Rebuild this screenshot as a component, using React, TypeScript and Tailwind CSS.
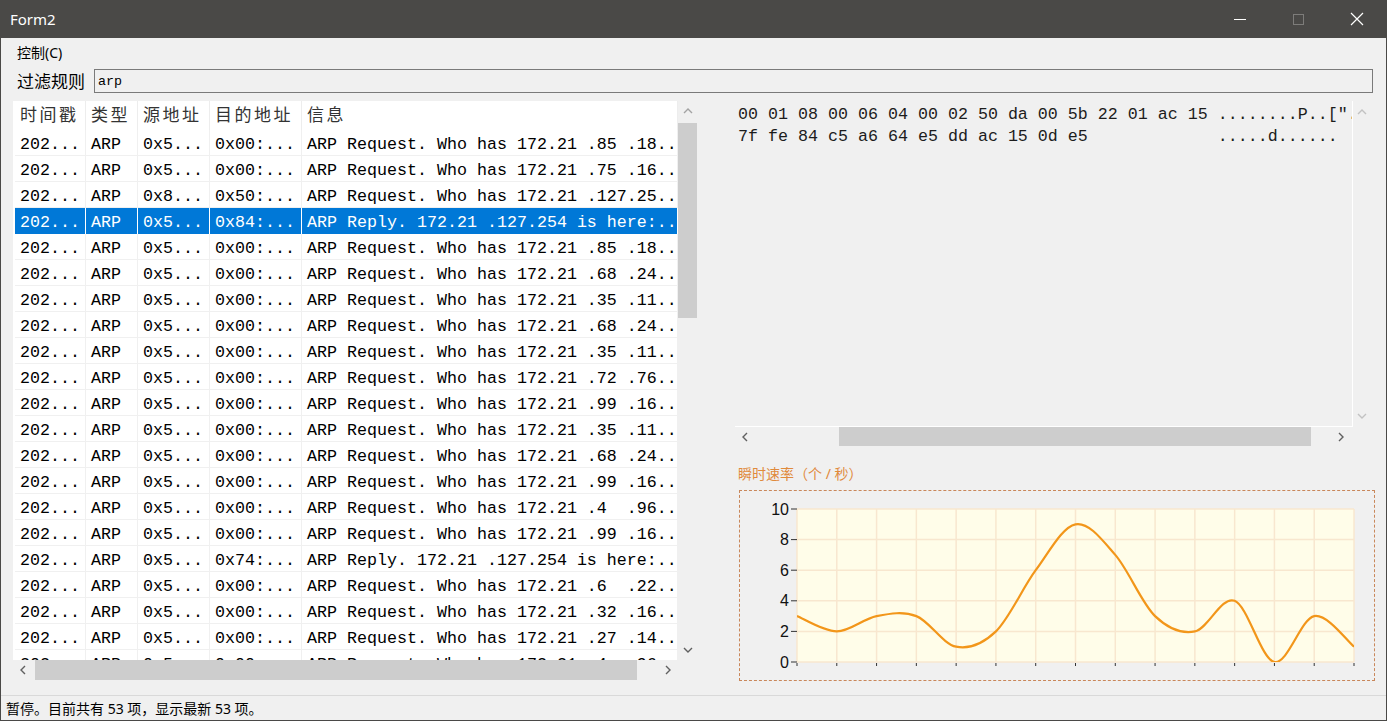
import React from 'react';

const MONO = "font-['Liberation_Mono','Noto_Sans_CJK_SC',monospace]";
const UI = "font-['Noto_Sans','Noto_Sans_CJK_SC',sans-serif]";

// [src, dst, info]
const rows: [string, string, string][] = [
  ['0x5...', '0x00:...', 'ARP Request. Who has 172.21 .85 .18..'],
  ['0x5...', '0x00:...', 'ARP Request. Who has 172.21 .75 .16..'],
  ['0x8...', '0x50:...', 'ARP Request. Who has 172.21 .127.25..'],
  ['0x5...', '0x84:...', 'ARP Reply. 172.21 .127.254 is here:..'],
  ['0x5...', '0x00:...', 'ARP Request. Who has 172.21 .85 .18..'],
  ['0x5...', '0x00:...', 'ARP Request. Who has 172.21 .68 .24..'],
  ['0x5...', '0x00:...', 'ARP Request. Who has 172.21 .35 .11..'],
  ['0x5...', '0x00:...', 'ARP Request. Who has 172.21 .68 .24..'],
  ['0x5...', '0x00:...', 'ARP Request. Who has 172.21 .35 .11..'],
  ['0x5...', '0x00:...', 'ARP Request. Who has 172.21 .72 .76..'],
  ['0x5...', '0x00:...', 'ARP Request. Who has 172.21 .99 .16..'],
  ['0x5...', '0x00:...', 'ARP Request. Who has 172.21 .35 .11..'],
  ['0x5...', '0x00:...', 'ARP Request. Who has 172.21 .68 .24..'],
  ['0x5...', '0x00:...', 'ARP Request. Who has 172.21 .99 .16..'],
  ['0x5...', '0x00:...', 'ARP Request. Who has 172.21 .4  .96..'],
  ['0x5...', '0x00:...', 'ARP Request. Who has 172.21 .99 .16..'],
  ['0x5...', '0x74:...', 'ARP Reply. 172.21 .127.254 is here:..'],
  ['0x5...', '0x00:...', 'ARP Request. Who has 172.21 .6  .22..'],
  ['0x5...', '0x00:...', 'ARP Request. Who has 172.21 .32 .16..'],
  ['0x5...', '0x00:...', 'ARP Request. Who has 172.21 .27 .14..'],
  ['0x5...', '0x00:...', 'ARP Request. Who has 172.21 .4  .96..'],
];
const SELECTED = 3;

const hexLines = [
  '00 01 08 00 06 04 00 02 50 da 00 5b 22 01 ac 15 ........P..[\"...',
  '7f fe 84 c5 a6 64 e5 dd ac 15 0d e5             .....d......',
];

// chart geometry (inside the dashed box)
const X0 = 57;
const X1 = 614;
const YT = 18;
const YB = 171;
const values = [3, 2, 3, 3, 1, 2, 6, 9, 7, 3, 2, 4, 0, 3, 1];
const step = (X1 - X0) / (values.length - 1);
const px = (i: number) => X0 + i * step;
const py = (v: number) => YB - (v * (YB - YT)) / 10;

function splinePath() {
  const pts = values.map((v, i) => [px(i), py(v)]);
  let d = `M${pts[0][0]},${pts[0][1]}`;
  for (let i = 0; i < pts.length - 1; i++) {
    const p0 = pts[Math.max(0, i - 1)];
    const p1 = pts[i];
    const p2 = pts[i + 1];
    const p3 = pts[Math.min(pts.length - 1, i + 2)];
    const c1 = [p1[0] + (p2[0] - p0[0]) / 6, p1[1] + (p2[1] - p0[1]) / 6];
    const c2 = [p2[0] - (p3[0] - p1[0]) / 6, p2[1] - (p3[1] - p1[1]) / 6];
    d += ` C${c1[0]},${c1[1]} ${c2[0]},${c2[1]} ${p2[0]},${p2[1]}`;
  }
  return d;
}

type Dir = 'up' | 'down' | 'left' | 'right';

function Chevron({ dir, color }: { dir: Dir; color: string }) {
  const d = {
    up: 'M1 7 L5 3 L9 7',
    down: 'M1 3 L5 7 L9 3',
    left: 'M7 1 L3 5 L7 9',
    right: 'M3 1 L7 5 L3 9',
  }[dir];
  return (
    <svg width="10" height="10" viewBox="0 0 10 10">
      <path d={d} fill="none" stroke={color} strokeWidth="1.4" />
    </svg>
  );
}

function TitleBar() {
  return (
    <div className="flex h-[38px] items-center bg-[#4a4947] text-white">
      <span className={`${UI} pl-[10px] text-[15px]`}>Form2</span>
      <div className="ml-auto flex h-full items-center">
        <div className="flex h-full w-[58px] items-center justify-center">
          <div className="h-px w-[12px] bg-white" />
        </div>
        <div className="flex h-full w-[58px] items-center justify-center">
          <div className="h-[11px] w-[11px] border border-[#7d7c7a]" />
        </div>
        <div className="flex h-full w-[60px] items-center justify-center">
          <svg width="14" height="14" viewBox="0 0 14 14">
            <path d="M1 1 L13 13 M13 1 L1 13" stroke="white" strokeWidth="1.2" />
          </svg>
        </div>
      </div>
    </div>
  );
}

function PacketTable() {
  const cols = 'grid grid-cols-[71px_52px_72px_92px_1fr]';
  return (
    <div className="flex h-[580px] w-[684px] flex-col">
      <div className="flex h-[559px]">
        <div className={`${MONO} w-[665px] overflow-hidden bg-white pl-[2px] text-[16.66px]`}>
          <div className={`${cols} h-[29px] text-[17px] tracking-[2.5px] text-[#333]`}>
            {['时间戳', '类型', '源地址', '目的地址', '信息'].map(h => (
              <div key={h} className="flex items-center border-r border-[#ededed] pl-[5px] pt-[3px]">
                {h}
              </div>
            ))}
          </div>
          {rows.map((r, i) => {
            const sel = i === SELECTED;
            const cells = ['202...', 'ARP', r[0], r[1], r[2]];
            return (
              <div
                key={i}
                className={`${cols} h-[26px] border-b ${sel ? 'border-[#0078d7] bg-[#0078d7] text-white' : 'border-[#f0f0f0] text-black'}`}
              >
                {cells.map((c, j) => (
                  <div
                    key={j}
                    className={`flex items-center whitespace-pre border-r pl-[5px] pt-[3px] ${sel ? 'border-white' : 'border-[#f0f0f0]'}`}
                  >
                    {c}
                  </div>
                ))}
              </div>
            );
          })}
        </div>
        <div className="flex w-[19px] flex-col bg-[#f0f0f0]">
          <div className="flex h-[20px] items-center justify-center">
            <Chevron dir="up" color="#a3a3a3" />
          </div>
          <div className="mt-[2px] h-[195px] bg-[#cdcdcd]" />
          <div className="flex-1" />
          <div className="flex h-[20px] items-center justify-center">
            <Chevron dir="down" color="#606060" />
          </div>
        </div>
      </div>
      <div className="flex h-[20px]">
        <div className="flex w-[665px] items-center bg-[#f0f0f0]">
          <div className="flex h-full w-[20px] items-center justify-center">
            <Chevron dir="left" color="#606060" />
          </div>
          <div className="ml-[2px] h-full w-[602px] bg-[#cdcdcd]" />
          <div className="flex-1" />
          <div className="flex h-full w-[21px] items-center justify-center">
            <Chevron dir="right" color="#606060" />
          </div>
        </div>
        <div className="w-[19px] bg-[#f0f0f0]" />
      </div>
    </div>
  );
}

function HexView() {
  return (
    <div className="flex h-[345px] flex-col">
      <div className="flex h-[326px]">
        <div className={`${MONO} w-[618px] overflow-hidden border-r border-b border-white pl-[3px] pt-[3px] text-[16.66px] leading-[22px] text-[#1c1c1c]`}>
          {hexLines.map(l => (
            <div key={l} className="whitespace-pre">
              {l}
            </div>
          ))}
        </div>
        <div className="flex w-[17px] flex-col justify-between py-[6px]">
          <div className="flex justify-center">
            <Chevron dir="up" color="#c2c2c2" />
          </div>
          <div className="flex justify-center">
            <Chevron dir="down" color="#c2c2c2" />
          </div>
        </div>
      </div>
      <div className="flex h-[19px] w-[618px] items-center">
        <div className="flex h-full w-[20px] items-center justify-center">
          <Chevron dir="left" color="#606060" />
        </div>
        <div className="ml-[84px] h-full w-[472px] bg-[#cdcdcd]" />
        <div className="flex-1" />
        <div className="flex h-full w-[24px] items-center justify-center">
          <Chevron dir="right" color="#606060" />
        </div>
      </div>
    </div>
  );
}

function RateChart() {
  const hLines = [0, 2, 4, 6, 8, 10];
  return (
    <div className="ml-[4px] mt-[6px] h-[191px] w-[636px] border border-dashed border-[#c9875a]">
      <svg width="634" height="189" viewBox="0 0 634 189" className="block">
        <defs>
          <clipPath id="plot">
            <rect x={X0} y={YT} width={X1 - X0} height={YB - YT} />
          </clipPath>
        </defs>
        <rect x={X0} y={YT} width={X1 - X0} height={YB - YT} fill="#fffde9" />
        {values.map((_, i) => (
          <line key={`v${i}`} x1={px(i)} x2={px(i)} y1={YT} y2={YB} stroke="#f8e7cf" strokeWidth="1.5" />
        ))}
        {hLines.map(v => (
          <line key={`h${v}`} x1={X0} x2={X1} y1={py(v)} y2={py(v)} stroke="#f8e7cf" strokeWidth="1.5" />
        ))}
        {hLines.map(v => (
          <g key={`l${v}`}>
            <line x1={X0 - 6} x2={X0} y1={py(v)} y2={py(v)} stroke="#333" strokeWidth="1" />
            <text
              x={X0 - 8}
              y={py(v) + 5.5}
              textAnchor="end"
              fontSize="16"
              fontFamily="Liberation Sans, Arial, sans-serif"
              fill="#111"
            >
              {v}
            </text>
          </g>
        ))}
        {values.map((_, i) => (
          <line key={`t${i}`} x1={px(i)} x2={px(i)} y1={YB + 1} y2={YB + 4} stroke="#333" strokeWidth="1" />
        ))}
        <path d={splinePath()} fill="none" stroke="#f2961a" strokeWidth="2.2" clipPath="url(#plot)" />
      </svg>
    </div>
  );
}

export default function App() {
  return (
    <div className="flex h-[721px] w-[1387px] flex-col overflow-hidden bg-[#f0f0f0]">
      <TitleBar />
      <div className="flex flex-1 flex-col border-x border-b border-[#4a4947]">
        <div className={`${UI} flex h-[28px] items-center pl-[16px] text-[14px] text-black`}>控制(C)</div>
        <div className="mt-[3px] flex h-[24px] items-center pl-[16px]">
          <span className={`${UI} w-[77px] pt-[2px] text-[17px] text-black`}>过滤规则</span>
          <div className={`${MONO} flex h-full w-[1279px] items-center border border-[#7a7a7a] pl-[3px] pt-[2px] text-[13.33px] text-black`}>
            arp
          </div>
        </div>
        <div className="mt-[8px] flex h-[580px] pl-[12px]">
          <PacketTable />
          <div className="ml-[38px] flex w-[640px] flex-col">
            <HexView />
            <div className={`${UI} mt-[18px] h-[20px] pl-[3px] text-[14px] leading-[20px] text-[#e08a3c]`}>
              瞬时速率（个 / 秒）
            </div>
            <RateChart />
          </div>
        </div>
        <div className="flex-1" />
        <div className={`${UI} flex h-[25px] items-center border-t border-[#d9d9d9] pl-[5px] text-[14px] text-black`}>
          暂停。目前共有 53 项，显示最新 53 项。
        </div>
      </div>
    </div>
  );
}
